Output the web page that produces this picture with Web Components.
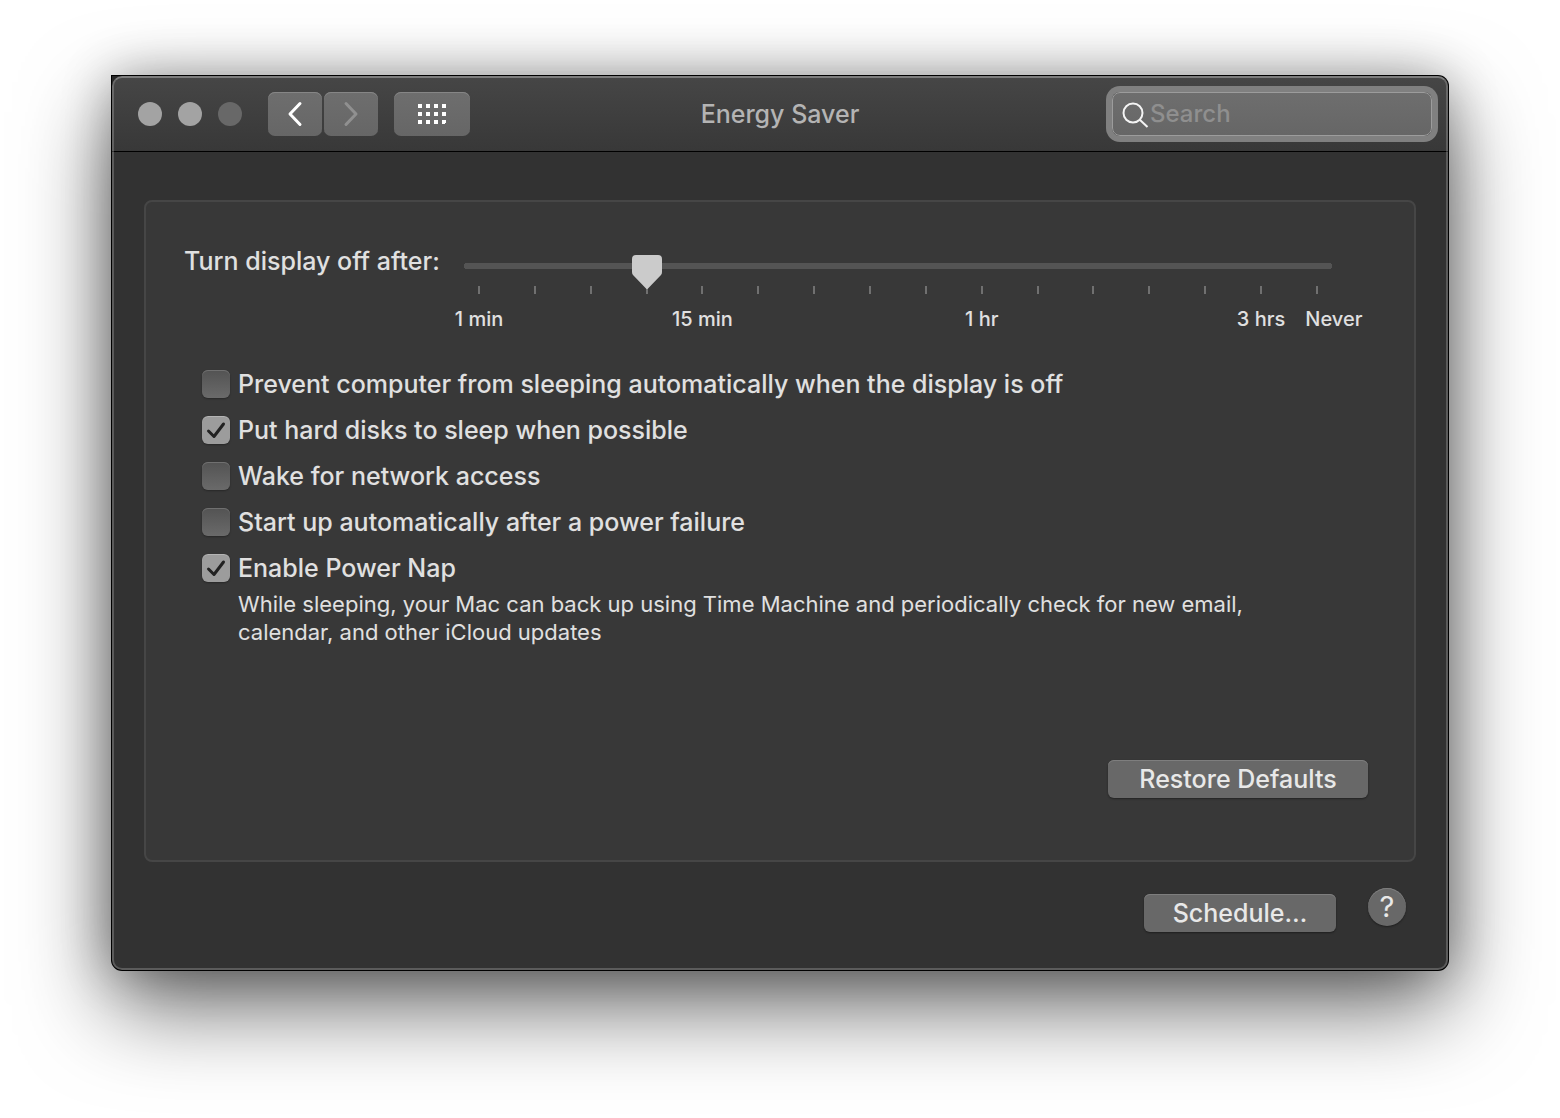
<!DOCTYPE html>
<html lang="en">
<head>
<meta charset="utf-8">
<title>Energy Saver</title>
<style>
  body {
    display: flow-root;
    min-height: 100vh;
    margin: 0;
    background: #fff;
    color: #e0e0e0;
    font: 25px/32px Inter, "Liberation Sans", sans-serif;
  }
</style>
</head>
<body>
<energy-saver></energy-saver>

<script>
const windowStyles = `
    <style>
        :host {
            display: block;
            margin: 76px 112px;
            border-radius: 0 10px 10px 10px;
            background: #262626;
            box-shadow: 0 0 0 1px #000, 0 36px 90px rgba(0,0,0,0.6), 0 0 50px rgba(0,0,0,0.3);
        }

        .frame {
            position: relative;
            border-radius: 10px;
            background: #323232;
            overflow: hidden;
        }

        .frame::after {
            content: "";
            position: absolute;
            inset: 0;
            border: 2px solid rgba(255,255,255,0.2);
            border-top-color: rgba(255,255,255,0.3);
            border-radius: 10px;
            pointer-events: none;
        }

        header {
            display: grid;
            grid-template-columns: 1fr auto 1fr;
            align-items: center;
            height: 75px;
            padding: 0 16px;
            box-sizing: border-box;
            background: linear-gradient(#464646, #383838);
        }

        .divider {
            height: 1px;
            background: #000;
        }

        .left {
            display: flex;
            align-items: center;
            padding-left: 10px;
        }

        h1 {
            margin: 0;
            font-size: 25px;
            font-weight: 500;
            color: #b4b4b4;
        }

        main {
            padding: 48px 32px 32px;
        }
    </style>
`;

class PrefsWindow extends HTMLElement {
  constructor() {
    super();
    this.root = this.attachShadow({ mode: 'open' });
    this.root.innerHTML = `
            ${windowStyles}
            <div class="frame">
                <header>
                    <div class="left">
                        <traffic-lights></traffic-lights>
                        <nav-buttons></nav-buttons>
                    </div>
                    <h1><slot name="title"></slot></h1>
                    <search-field></search-field>
                </header>
                <div class="divider"></div>
                <main><slot></slot></main>
            </div>
        `;
  }
}

class TrafficLights extends HTMLElement {
  constructor() {
    super();
    this.root = this.attachShadow({ mode: 'open' });
    this.root.innerHTML = `
            <style>
                :host {
                    display: flex;
                    gap: 16px;
                    margin-right: 26px;
                }

                button {
                    width: 24px;
                    height: 24px;
                    padding: 0;
                    border: 0;
                    border-radius: 50%;
                    background: #a3a3a3;
                }

                button:disabled {
                    background: #686868;
                }
            </style>
            <button aria-label="Close"></button>
            <button aria-label="Minimize"></button>
            <button aria-label="Zoom" disabled></button>
        `;
  }
}

class NavButtons extends HTMLElement {
  constructor() {
    super();
    this.root = this.attachShadow({ mode: 'open' });
    this.root.innerHTML = `
            <style>
                :host {
                    display: flex;
                    gap: 2px;
                }

                button {
                    display: flex;
                    align-items: center;
                    justify-content: center;
                    width: 54px;
                    height: 44px;
                    padding: 0;
                    border: 0;
                    border-radius: 7px;
                    background: linear-gradient(#6e6e6e, #666);
                    box-shadow: inset 0 1px #868686;
                    color: #fff;
                }

                button:disabled {
                    color: #909090;
                }

                .all {
                    width: 76px;
                    margin-left: 14px;
                }

                svg {
                    display: block;
                    fill: none;
                    stroke: currentColor;
                    stroke-width: 3;
                    stroke-linecap: round;
                    stroke-linejoin: round;
                }

                .all svg {
                    fill: currentColor;
                    stroke: none;
                }
            </style>
            <button aria-label="Back">
                <svg width="16" height="26" viewBox="0 0 16 26"><path d="M13 2.500 3 13l10 10.500"/></svg>
            </button>
            <button aria-label="Forward" disabled>
                <svg width="16" height="26" viewBox="0 0 16 26"><path d="m3 2.500 10 10.500L3 23.500"/></svg>
            </button>
            <button class="all" aria-label="Show All">
                <svg width="28" height="20" viewBox="0 0 28 20">
                    <path d="M0 0h4v4H0zM8 0h4v4H8zM16 0h4v4h-4zM24 0h4v4h-4zM0 8h4v4H0zM8 8h4v4H8zM16 8h4v4h-4zM24 8h4v4h-4zM0 16h4v4H0zM8 16h4v4H8zM16 16h4v4h-4zM24 16h4v3h-1v1h-3z"/>
                </svg>
            </button>
        `;
  }
}

class SearchField extends HTMLElement {
  constructor() {
    super();
    this.root = this.attachShadow({ mode: 'open' });
    this.root.innerHTML = `
            <style>
                :host {
                    display: flex;
                    justify-content: flex-end;
                }

                label {
                    display: flex;
                    align-items: center;
                    box-sizing: border-box;
                    width: 320px;
                    height: 44px;
                    padding: 0 8px;
                    border: 1px solid #9c9c9c;
                    border-radius: 8px;
                    background: linear-gradient(#6e6e6e, #666);
                    box-shadow: 0 0 0 6px #808080;
                }

                svg {
                    flex: none;
                    fill: none;
                    stroke: #f4f4f4;
                    stroke-width: 2;
                }

                input {
                    flex: 1;
                    min-width: 0;
                    height: 32px;
                    padding: 0;
                    border: 0;
                    outline: 0;
                    background: none;
                    color: #e0e0e0;
                    font: inherit;
                    font-size: 24px;
                    font-weight: 500;
                }

                input::placeholder {
                    color: #8f8f8f;
                    opacity: 1;
                }
            </style>
            <label>
                <svg width="29" height="28" viewBox="0 0 29 28" aria-hidden="true">
                    <circle cx="12" cy="13" r="9.500"/>
                    <path d="m18.500 19.500 8 7.500"/>
                </svg>
                <input type="text" placeholder="Search" aria-label="Search">
            </label>
        `;
  }
}

const sliderStyles = `
    <style>
        :host {
            display: flex;
            gap: 20px;
        }

        .name {
            flex: none;
            width: 260px;
            margin-top: 4px;
            font-weight: 500;
            white-space: nowrap;
        }

        .scale {
            flex: 1;
            min-width: 0;
        }

        input {
            -webkit-appearance: none;
            appearance: none;
            position: relative;
            z-index: 1;
            display: block;
            width: 100%;
            height: 34px;
            margin: 14px 0 0;
            background: none;
        }

        input::-webkit-slider-runnable-track {
            height: 34px;
            background:
                radial-gradient(circle at 3px 3px, #545454 3px, transparent 3px) 0 8px / 6px 6px no-repeat,
                radial-gradient(circle at 3px 3px, #545454 3px, transparent 3px) 100% 8px / 6px 6px no-repeat,
                linear-gradient(#545454, #545454) 50% 8px / calc(100% - 6px) 6px no-repeat;
        }

        input::-webkit-slider-thumb {
            -webkit-appearance: none;
            appearance: none;
            width: 30px;
            height: 34px;
            background: url("data:image/svg+xml,%3Csvg xmlns='http://www.w3.org/2000/svg' width='30' height='34'%3E%3Cpath d='M4 0h22q4 0 4 4v13q0 2-1 3L16 33.500q-1 1-2 0L1 20q-1-1-1-3V4q0-4 4-4z' fill='%23cbcbcb'/%3E%3C/svg%3E");
        }

        .ticks {
            display: flex;
            justify-content: space-between;
            height: 50px;
            margin: -3px 14px 0;
            padding: 0;
            list-style: none;
        }

        .ticks li {
            display: flex;
            flex-direction: column;
            align-items: center;
            gap: 13px;
            width: 2px;
            font-size: 20px;
            font-weight: 500;
            line-height: 24px;
            white-space: nowrap;
        }

        .ticks li::before {
            content: "";
            flex: none;
            width: 2px;
            height: 8px;
            background: #707070;
        }

        .ticks li:last-child span {
            padding-left: 34px;
        }
    </style>
`;

class TimeSlider extends HTMLElement {
  constructor() {
    super();
    this.root = this.attachShadow({ mode: 'open' });
    this.renderHTML();
  }

  renderHTML() {
    const marks = { 0: '1 min', 4: '15 min', 9: '1 hr', 14: '3 hrs', 15: 'Never' };
    let ticks = '';
    for (let i = 0; i < 16; i++) {
      ticks += `<li>${marks[i] ? `<span>${marks[i]}</span>` : ''}</li>`;
    }
    this.root.innerHTML = `
            ${sliderStyles}
            <label class="name" for="range"><slot></slot></label>
            <div class="scale">
                <input id="range" type="range" min="0" max="15" step="1" value="${this.getAttribute('value')}">
                <ul class="ticks">${ticks}</ul>
            </div>
        `;
  }
}

class CheckOption extends HTMLElement {
  constructor() {
    super();
    this.root = this.attachShadow({ mode: 'open' });
    this.root.innerHTML = `
            <style>
                :host {
                    display: block;
                }

                label {
                    display: flex;
                    align-items: center;
                    gap: 8px;
                    font-weight: 500;
                }

                input {
                    -webkit-appearance: none;
                    appearance: none;
                    flex: none;
                    width: 28px;
                    height: 28px;
                    margin: 0;
                    border-radius: 6px;
                    background: linear-gradient(#535353, #6a6a6a);
                    box-shadow: inset 0 1px #707070, 0 1px 2px rgba(0,0,0,0.3);
                }

                input:checked {
                    background: url("data:image/svg+xml,%3Csvg xmlns='http://www.w3.org/2000/svg' width='28' height='28'%3E%3Cpath d='m6.500 15 5.500 5.500L21.500 8' fill='none' stroke='%23222' stroke-width='3' stroke-linecap='round' stroke-linejoin='round'/%3E%3C/svg%3E") #9c9c9c;
                    box-shadow: inset 0 1px #b4b4b4, 0 1px 2px rgba(0,0,0,0.3);
                }
            </style>
            <label>
                <input type="checkbox" ${this.hasAttribute('checked') ? 'checked' : ''}>
                <slot></slot>
            </label>
        `;
  }
}

class PushButton extends HTMLElement {
  constructor() {
    super();
    this.root = this.attachShadow({ mode: 'open' });
    this.root.innerHTML = `
            <style>
                :host {
                    display: block;
                }

                button {
                    display: block;
                    width: 100%;
                    height: 38px;
                    padding: 0;
                    border: 0;
                    border-radius: 6px;
                    background: #686868;
                    box-shadow: inset 0 1px #7e7e7e, 0 1px 2px rgba(0,0,0,0.4);
                    color: #e8e8e8;
                    font: inherit;
                    font-weight: 500;
                    line-height: 38px;
                    white-space: nowrap;
                }

                :host([round]) button {
                    border-radius: 50%;
                    font-size: 29px;
                    font-weight: 400;
                }
            </style>
            <button><slot></slot></button>
        `;
  }
}

const paneStyles = `
    <style>
        .group {
            padding: 39px 82px 62px 38px;
            border: 2px solid #464646;
            border-radius: 8px;
            background: #383838;
        }

        .options {
            display: grid;
            gap: 14px;
            padding: 32px 0 0 18px;
        }

        .note {
            max-width: 1020px;
            margin: 6px 0 0 54px;
            font-size: 22px;
            line-height: 28px;
        }

        .restore {
            width: 260px;
            margin: 114px -36px 0 auto;
        }

        .bottom {
            display: flex;
            justify-content: flex-end;
            align-items: center;
            gap: 32px;
            margin-top: 26px;
            padding-right: 10px;
        }

        .schedule {
            width: 192px;
        }

        .help {
            width: 38px;
            margin-bottom: 12px;
        }
    </style>
`;

class EnergySaver extends HTMLElement {
  constructor() {
    super();
    this.root = this.attachShadow({ mode: 'open' });
    this.root.innerHTML = `
            ${paneStyles}
            <prefs-window>
                <span slot="title">Energy Saver</span>
                <section class="group">
                    <time-slider value="3">Turn display off after:</time-slider>
                    <div class="options">
                        <check-option>Prevent computer from sleeping automatically when the display is off</check-option>
                        <check-option checked>Put hard disks to sleep when possible</check-option>
                        <check-option>Wake for network access</check-option>
                        <check-option>Start up automatically after a power failure</check-option>
                        <check-option checked>Enable Power Nap</check-option>
                    </div>
                    <p class="note">While sleeping, your Mac can back up using Time Machine and periodically check for new email, calendar, and other iCloud updates</p>
                    <push-button class="restore">Restore Defaults</push-button>
                </section>
                <div class="bottom">
                    <push-button class="schedule">Schedule…</push-button>
                    <push-button class="help" round>?</push-button>
                </div>
            </prefs-window>
        `;
  }
}

customElements.define('traffic-lights', TrafficLights);
customElements.define('nav-buttons', NavButtons);
customElements.define('search-field', SearchField);
customElements.define('prefs-window', PrefsWindow);
customElements.define('time-slider', TimeSlider);
customElements.define('check-option', CheckOption);
customElements.define('push-button', PushButton);
customElements.define('energy-saver', EnergySaver);
</script>
</body>
</html>
